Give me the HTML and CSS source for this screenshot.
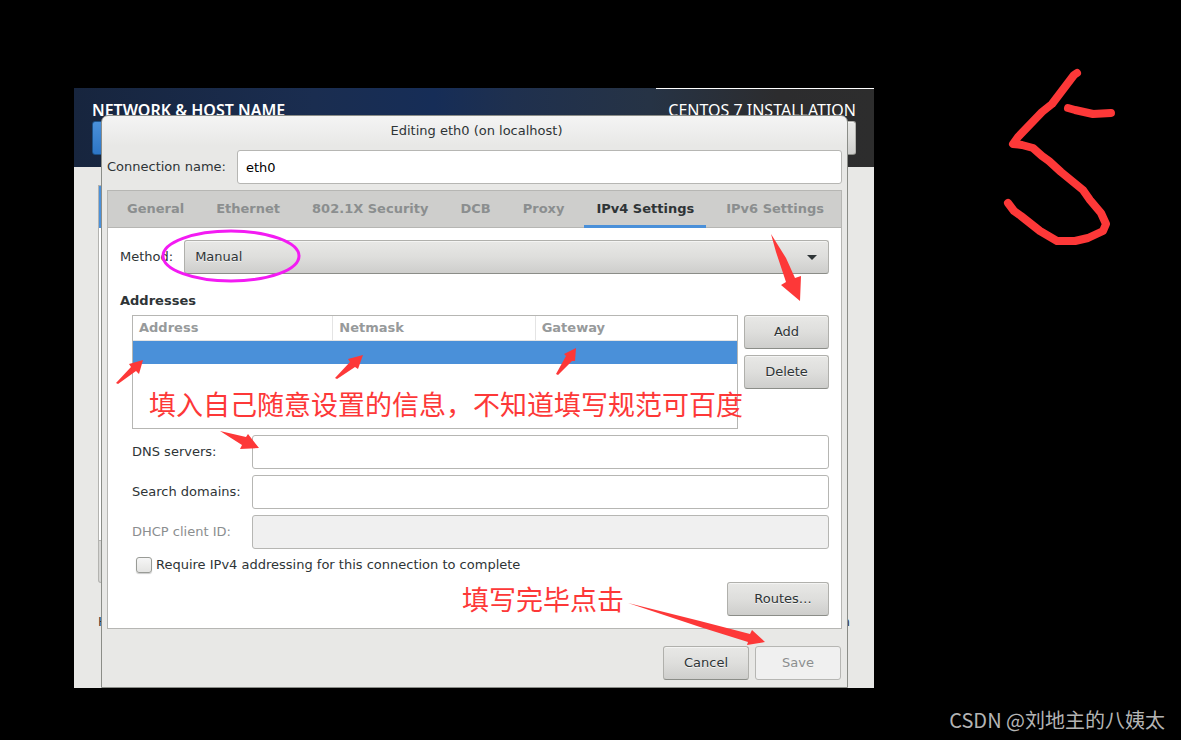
FILE: index.html
```
<!DOCTYPE html>
<html lang="en">
<head>
    <meta charset="UTF-8">
    <meta name="viewport" content="width=device-width, initial-scale=1.0">
    <title>Editing eth0 (on localhost)</title>
    <link rel="stylesheet" href="styles.css">
</head>
<body>
<main class="screen">
    <!-- Installer window behind the dialog -->
    <div class="installer">
        <header class="installer-header">
            <div class="installer-titles">
                <span class="spoke-name">NETWORK &amp; HOST NAME</span>
                <span>CENTOS 7 INSTALLATION</span>
            </div>
            <div class="installer-actions">
                <button class="done" type="button" aria-label="Done"></button>
                <button class="btn keyboard" type="button" aria-label="Keyboard layout"></button>
            </div>
        </header>
        <div class="installer-body">
            <div class="device-list"><div class="device-selected"></div></div>
            <div class="device-toolbar"></div>
            <div class="host-row"><span>H</span><span>n</span></div>
        </div>
    </div>

    <section class="dialog">
        <h1 class="dialog-title">Editing eth0 (on localhost)</h1>
        <div class="connection">
            <label for="connection-name">Connection name:</label>
            <input class="field" id="connection-name" type="text" value="eth0">
        </div>

        <div class="notebook">
            <nav class="tabs">
                <button class="tab" type="button">General</button>
                <button class="tab" type="button">Ethernet</button>
                <button class="tab" type="button">802.1X Security</button>
                <button class="tab" type="button">DCB</button>
                <button class="tab" type="button">Proxy</button>
                <button class="tab active" type="button">IPv4 Settings</button>
                <button class="tab" type="button">IPv6 Settings</button>
            </nav>
            <div class="page">
                <div class="method">
                    <label for="method">Method:</label>
                    <div class="select-box">
                        <select class="btn" id="method">
                            <option>Manual</option>
                        </select>
                        <svg class="caret" width="12" height="6" viewBox="0 0 12 6"><path d="M1 0H11L6 5Z" fill="#2e3436"/></svg>
                    </div>
                </div>

                <h2 class="section-title">Addresses</h2>
                <div class="section">
                    <div class="addresses">
                        <div class="table-box">
                            <table>
                                <thead>
                                    <tr><th>Address</th><th>Netmask</th><th>Gateway</th></tr>
                                </thead>
                                <tbody>
                                    <tr><td></td><td></td><td></td></tr>
                                </tbody>
                            </table>
                        </div>
                        <div class="address-buttons">
                            <button class="btn" type="button">Add</button>
                            <button class="btn" type="button">Delete</button>
                        </div>
                    </div>
                    <div class="form">
                        <label for="dns">DNS servers:</label>
                        <input class="field" id="dns" type="text">
                        <label for="search">Search domains:</label>
                        <input class="field" id="search" type="text">
                        <label class="muted" for="dhcp">DHCP client ID:</label>
                        <input class="field" id="dhcp" type="text" disabled>
                    </div>
                    <label class="require">
                        <input type="checkbox">
                        Require IPv4 addressing for this connection to complete
                    </label>
                    <div class="routes">
                        <button class="btn" type="button">Routes…</button>
                    </div>
                </div>
            </div>
        </div>

        <footer class="dialog-footer">
            <button class="btn" type="button">Cancel</button>
            <button class="btn" type="button" disabled>Save</button>
        </footer>
    </section>
</main>

<!-- Hand-drawn notes -->
<svg class="notes" width="1181" height="740" viewBox="0 0 1181 740">
    <ellipse cx="231" cy="256" rx="68" ry="25" fill="none" stroke="#f31bf3" stroke-width="3"/>
    <g fill="#fd3838">
        <path d="M771 234L786 258L795 278L801 276L800 301L781 285L786 282L776 252Z"/>
        <path d="M116 383L131 367L129 364L143 360L139 374L136 371L118 384Z"/>
        <path d="M335 378L350 362L348 359L363 355L358 369L355 367L337 379Z"/>
        <path d="M556 374L566 356L564 354L576 348L575 361L572 361L558 375Z"/>
        <path d="M220 431L246 437L248 434L259 448L240 449L242 445Z"/>
        <path d="M628 603L700 621L750 634L752 630L765 642L747 645L748 642L700 627Z"/>
    </g>
    <g class="strokes">
        <path d="M1077 73L1074 75L1052 104L1042 112L1018 137L1013 144L1022 145L1033 148L1042 156L1049 161L1061 172L1083 190L1090 200L1101 213L1106 224L1103 231L1088 238L1075 241L1057 241L1040 231L1021 216L1014 211L1008 203"/>
        <path d="M1068 108L1075 110L1093 114L1111 113"/>
    </g>
    <text x="149" y="415">填入自己随意设置的信息，不知道填写规范可百度</text>
    <text x="462" y="610">填写完毕点击</text>
</svg>
<div class="watermark">CSDN @刘地主的八姨太</div>
</body>
</html>
```
FILE: styles.css
```
* {
    box-sizing: border-box;
}
body {
    margin: 0;
    padding: 88px 307px 52px 74px;
    position: relative;
    background: #000;
    color: #2e3436;
    font: 13px/16px "DejaVu Sans", sans-serif;
}
input, select, button {
    font: inherit;
    color: inherit;
}
.screen {
    position: relative;
    padding: 27px 26px 0 27px;
    background: #e8e8e6;
}

/* Installer */
.installer {
    position: absolute;
    inset: 0;
    display: flex;
    flex-direction: column;
    overflow: hidden;
}
.installer-header {
    height: 79px;
    padding: 11px 18px 0;
    background:
        linear-gradient(#fff, #fff) right top / 218px 1px no-repeat,
        linear-gradient(to right, #17253e 0, #1a2d50 30%, #162d57 45%, #1f304e 55%, #263345 72%, #2c2c2e 88%, #2d2d2d);
}
.installer-titles {
    display: flex;
    justify-content: space-between;
    color: #fff;
    font: 16px/22px "Noto Sans", sans-serif;
}
.spoke-name {
    font-weight: 600;
}
.installer-actions {
    display: flex;
    justify-content: space-between;
}
.done {
    width: 80px;
    height: 34px;
    border: 1px solid #1c5187;
    border-radius: 3px;
    background: linear-gradient(#4a90d9, #2d76c6);
}
.keyboard {
    width: 60px;
}
.installer-body {
    padding: 18px 24px;
    flex: 1;
}
/* the dialog reaches past the right end of the list */
.device-list {
    width: 80%;
    height: 356px;
    border: 1px solid #b3b3b0;
    background: #fff;
}
.device-selected {
    height: 42px;
    background: #4a90d9;
}
.device-toolbar {
    width: 80%;
    height: 42px;
    border: 1px solid #b3b3b0;
    border-top: 0;
    border-radius: 0 0 3px 3px;
    background: #d6d6d4;
}
.host-row {
    display: flex;
    justify-content: space-between;
    margin-top: 31px;
}

/* Dialog */
.dialog {
    position: relative;
    padding: 0 5px 7px;
    border: 1px solid #8b8d88;
    border-radius: 7px 7px 0 0;
    background: linear-gradient(#f4f4f4, #e8e8e6 30px);
}
.dialog-title {
    margin: 0 0 4px;
    padding-left: 4px;
    font-size: 13px;
    font-weight: 400;
    line-height: 30px;
    text-align: center;
}
.connection {
    display: flex;
    align-items: center;
    gap: 11px;
}
.field {
    flex: 1;
    width: 100%;
    height: 34px;
    padding: 0 8px;
    border: 1px solid #b6b6b3;
    border-radius: 3px;
    background: #fff;
    color: #000;
}
.field:disabled {
    background: #f0f0f0;
}
.btn {
    height: 34px;
    padding: 0 8px;
    border: 1px solid #b0b0ac;
    border-bottom-color: #8b8d88;
    border-radius: 3px;
    background: linear-gradient(#e8e8e6, #dededc 50%, #cececc);
    box-shadow: inset 0 1px #f4f4f3;
    text-shadow: 0 1px #f4f4f3;
}
.btn:disabled {
    border-color: #b6b6b3;
    background: #f0f0f0;
    color: #8b8e8f;
    box-shadow: none;
}

/* Notebook */
.notebook {
    margin-top: 6px;
    border: 1px solid #b6b6b3;
    background: #fff;
}
.tabs {
    display: flex;
    gap: 8px;
    height: 37px;
    padding: 0 7px;
    border-bottom: 1px solid #b6b6b3;
    background: #cececc;
}
.tab {
    height: 37px;
    padding: 2px 12px 0;
    border: 0;
    border-bottom: 3px solid transparent;
    background: none;
    color: #8b8e8f;
    font-weight: 700;
    white-space: nowrap;
}
.tab.active {
    border-color: #4a90d9;
    color: #2e3436;
}
.page {
    padding: 12px;
}
.method {
    display: flex;
    align-items: center;
    gap: 11px;
}
.select-box {
    position: relative;
    flex: 1;
}
.select-box select {
    display: block;
    width: 100%;
    padding-left: 10px;
    appearance: none;
}
.caret {
    position: absolute;
    top: 15px;
    right: 11px;
}
.section-title {
    margin: 19px 0 6px;
    font-size: 13px;
    line-height: 16px;
}
.section {
    padding-left: 12px;
}
.addresses {
    display: flex;
    gap: 6px;
}
.table-box {
    flex: 1;
    height: 114px;
    border: 1px solid #b6b6b3;
}
.address-buttons {
    display: flex;
    flex-direction: column;
    gap: 6px;
    width: 85px;
}
table {
    width: 100%;
    border-collapse: separate;
    border-spacing: 0;
    table-layout: fixed;
}
th {
    height: 25px;
    padding: 0 6px;
    border-bottom: 1px solid #e4e4e4;
    color: #979a9b;
    text-align: left;
}
th:first-child {
    width: 33%;
}
th + th {
    border-left: 1px solid #e4e4e4;
}
td {
    height: 23px;
    padding: 0;
    background: #4a90d9;
}
.form {
    display: grid;
    grid-template-columns: auto 1fr;
    gap: 6px 11px;
    align-items: center;
    margin-top: 6px;
}
.muted {
    color: #8b8e8f;
}
.require {
    display: flex;
    align-items: center;
    gap: 4px;
    margin-top: 8px;
    padding-left: 4px;
}
.require input {
    appearance: none;
    width: 16px;
    height: 16px;
    margin: 0;
    border: 1px solid #999b96;
    border-radius: 3px;
    background: linear-gradient(#f6f6f6, #e4e4e2);
    box-shadow: 0 1px 1px #ccc;
}
.routes {
    display: flex;
    justify-content: flex-end;
    margin-top: 9px;
}
.routes .btn {
    width: 102px;
    padding-left: 18px;
}
.dialog-footer {
    display: flex;
    justify-content: flex-end;
    gap: 6px;
    padding: 17px 1px 0;
}
.dialog-footer .btn {
    width: 86px;
}

/* Notes */
.notes {
    position: absolute;
    top: 0;
    left: 0;
    pointer-events: none;
}
.notes text {
    fill: #fd3838;
    font: 27px "Noto Sans CJK SC", sans-serif;
}
.strokes {
    fill: none;
    stroke: #fd3838;
    stroke-width: 8;
    stroke-linecap: round;
    stroke-linejoin: round;
}
.watermark {
    position: absolute;
    right: 16px;
    bottom: 7px;
    color: #b4b4b4;
    font: 20px/26px "Noto Sans CJK SC", sans-serif;
}
```
